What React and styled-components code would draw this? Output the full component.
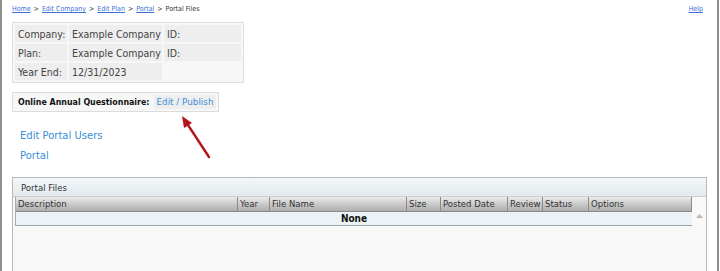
import React from 'react';
import styled, { createGlobalStyle } from 'styled-components';

const GlobalStyle = createGlobalStyle`
  html, body {
    margin: 0;
    padding: 0;
    background: #fff;
    font-family: "DejaVu Sans", Verdana, sans-serif;
    font-size: 10px;
    color: #333;
  }
`;

const condensed = `"DejaVu Sans Condensed", "DejaVu Sans", sans-serif`;

const Page = styled.div`
  position: relative;
  box-sizing: border-box;
  width: 719px;
  height: 271px;
  border-left: 2px solid #8e8e8e;
  border-right: 2px solid #8e8e8e;
  padding: 3px 12px 0 10px;
  overflow: hidden;
`;

const TopBar = styled.div`
  display: flex;
  justify-content: space-between;
  align-items: center;
  height: 12px;
  font-family: ${condensed};
  font-size: 7px;
  color: #333;
`;

const Crumbs = styled.div`
  display: flex;
  gap: 3px;
  a { color: #3a6fd8; text-decoration: underline; }
`;

const HelpLink = styled.a`
  color: #3a6fd8;
  text-decoration: underline;
  margin-right: 2px;
`;

const InfoTable = styled.table`
  margin-top: 7px;
  border: 1px solid #dedede;
  background: #f7f7f7;
  border-spacing: 2px;
  padding: 0;
  table-layout: fixed;
  width: 232px;
  font-family: ${condensed};
  font-size: 10.5px;
  color: #444;
  td {
    height: 17px;
    padding: 0 3px;
    white-space: nowrap;
    overflow: hidden;
  }
`;

const Cell = styled.td`
  width: ${p => p.$w}px;
  background: ${p => (p.$plain ? '#f7f7f7' : '#eeeeee')};
`;

const QuestBox = styled.div`
  display: inline-flex;
  margin-top: 9px;
  border: 1px solid #dcdcdc;
  background: #f7f7f7;
  padding: 2px;
  gap: 1px;
`;

const QuestLabel = styled.span`
  font-family: ${condensed};
  font-weight: bold;
  font-size: 8.8px;
  line-height: 14px;
  color: #111;
  padding: 0 3px;
  background: #f7f7f7;
`;

const QuestAction = styled.a`
  font-size: 8.8px;
  line-height: 14px;
  color: #3a8ed6;
  background: #eeeeee;
  padding: 0 3px;
`;

const Links = styled.div`
  display: flex;
  flex-direction: column;
  gap: 7px;
  margin: 17px 0 0 8px;
  a {
    color: #3a8ed6;
    font-size: 10px;
    line-height: 13px;
  }
`;

const Panel = styled.div`
  margin-top: 15px;
  width: 695px;
  box-sizing: border-box;
  border: 1px solid #b9b9b9;
  border-bottom: none;
  height: 94px;
  background: #f8f8f8;
  padding: 0 0 0 2px;
`;

const PanelHead = styled.div`
  height: 18px;
  display: flex;
  align-items: center;
  padding-left: 8px;
  margin-left: -2px;
  background: linear-gradient(#f3f6f8, #e3eaee);
  border-bottom: 1px solid #c7cfd4;
  font-family: ${condensed};
  font-size: 9.5px;
  color: #333;
`;

const GridWrap = styled.div`
  display: flex;
`;

const Grid = styled.div`
  width: 676px;
  border-left: 1px solid #aaa;
`;

const HeadRow = styled.div`
  display: grid;
  grid-template-columns: 222px 32px 137px 34px 67px 35px 46px 1fr;
  height: 14px;
  background: linear-gradient(#ececec, #c4c4c4 60%, #b0b0b0);
  border-bottom: 1px solid #8a8a8a;
`;

const HeadCell = styled.div`
  font-family: ${condensed};
  font-size: 9.5px;
  line-height: 14px;
  padding-left: 2px;
  color: #333;
  border-right: 1px solid #8a8a8a;
  white-space: nowrap;
  overflow: hidden;
`;

const EmptyRow = styled.div`
  height: 13px;
  line-height: 13px;
  text-align: center;
  font-family: ${condensed};
  font-weight: bold;
  font-size: 10px;
  color: #111;
  background: #edf2f6;
  border-bottom: 1px solid #9aa3a8;
`;

const ScrollCol = styled.div`
  width: 14px;
  display: flex;
  justify-content: center;
  padding-top: 17px;
  box-sizing: border-box;
`;

const Arrow = styled.svg`
  position: absolute;
  left: 170px;
  top: 109px;
`;

export default function App() {
  const cols = ['Description', 'Year', 'File Name', 'Size', 'Posted Date', 'Review', 'Status', 'Options'];
  return (
    <>
      <GlobalStyle />
      <Page>
        <TopBar>
          <Crumbs>
            <a>Home</a><span>&gt;</span>
            <a>Edit Company</a><span>&gt;</span>
            <a>Edit Plan</a><span>&gt;</span>
            <a>Portal</a><span>&gt;</span>
            <span>Portal Files</span>
          </Crumbs>
          <HelpLink>Help</HelpLink>
        </TopBar>

        <InfoTable>
          <tbody>
            <tr>
              <Cell $w={46}>Company:</Cell>
              <Cell $w={87}>Example Company</Cell>
              <Cell $w={71}>ID:</Cell>
            </tr>
            <tr>
              <Cell $w={46}>Plan:</Cell>
              <Cell $w={87}>Example Company</Cell>
              <Cell $w={71}>ID:</Cell>
            </tr>
            <tr>
              <Cell $w={46}>Year End:</Cell>
              <Cell $w={87}>12/31/2023</Cell>
              <Cell $w={71} $plain />
            </tr>
          </tbody>
        </InfoTable>

        <div>
          <QuestBox>
            <QuestLabel>Online Annual Questionnaire:</QuestLabel>
            <QuestAction>Edit / Publish</QuestAction>
          </QuestBox>
        </div>

        <Links>
          <a>Edit Portal Users</a>
          <a>Portal</a>
        </Links>

        <Panel>
          <PanelHead>Portal Files</PanelHead>
          <GridWrap>
            <Grid>
              <HeadRow>
                {cols.map(c => <HeadCell key={c}>{c}</HeadCell>)}
              </HeadRow>
              <EmptyRow>None</EmptyRow>
            </Grid>
            <ScrollCol>
              <svg width="7" height="4" viewBox="0 0 7 4">
                <path d="M0 4 L3.5 0 L7 4 Z" fill="#b8b8b8" />
              </svg>
            </ScrollCol>
          </GridWrap>
        </Panel>

        <Arrow width="42" height="54" viewBox="0 0 42 54">
          <path d="M37 48 L14 13" stroke="#b3161c" strokeWidth="2.4" strokeLinecap="round" />
          <path d="M10 7 L20 14 L12 19 Z" fill="#b3161c" />
        </Arrow>
      </Page>
    </>
  );
}
